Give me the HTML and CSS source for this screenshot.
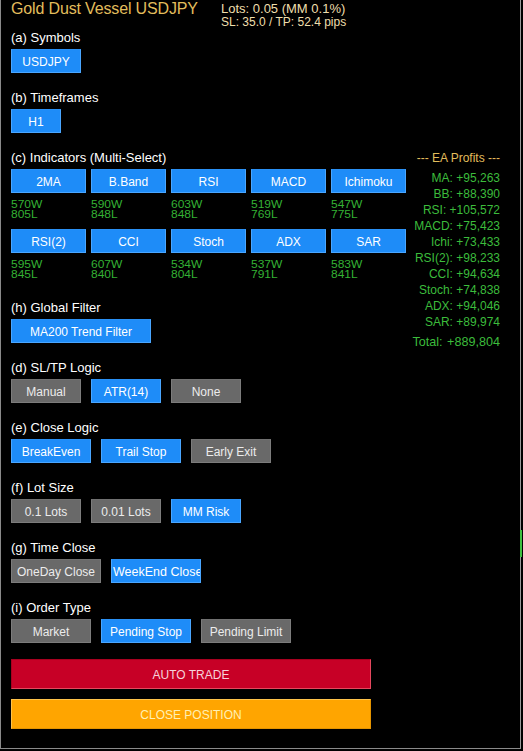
FILE: index.html
```html
<!DOCTYPE html>
<html>
<head>
<meta charset="utf-8">
<link rel="stylesheet" href="styles.css">
</head>
<body>
<div class="panel">
  <header class="head">
    <div class="title">Gold Dust Vessel USDJPY</div>
    <div class="info">
      <div class="lots">Lots: 0.05 (MM 0.1%)</div>
      <div class="sltp">SL: 35.0 / TP: 52.4 pips</div>
    </div>
  </header>

  <section class="sec">
    <div class="label">(a) Symbols</div>
    <div class="row"><div class="btn on w70">USDJPY</div></div>
  </section>

  <section class="sec">
    <div class="label">(b) Timeframes</div>
    <div class="row"><div class="btn on w50">H1</div></div>
  </section>

  <div class="mid">
    <div class="midleft">
      <section class="sec ind">
        <div class="label">(c) Indicators (Multi-Select)</div>
        <div class="grid">
          <div class="cell"><div class="btn on">2MA</div><div class="stats">570W<br>805L</div></div>
          <div class="cell"><div class="btn on">B.Band</div><div class="stats">590W<br>848L</div></div>
          <div class="cell"><div class="btn on">RSI</div><div class="stats">603W<br>848L</div></div>
          <div class="cell"><div class="btn on">MACD</div><div class="stats">519W<br>769L</div></div>
          <div class="cell"><div class="btn on">Ichimoku</div><div class="stats">547W<br>775L</div></div>
          <div class="cell"><div class="btn on">RSI(2)</div><div class="stats">595W<br>845L</div></div>
          <div class="cell"><div class="btn on">CCI</div><div class="stats">607W<br>840L</div></div>
          <div class="cell"><div class="btn on">Stoch</div><div class="stats">534W<br>804L</div></div>
          <div class="cell"><div class="btn on">ADX</div><div class="stats">537W<br>791L</div></div>
          <div class="cell"><div class="btn on">SAR</div><div class="stats">583W<br>841L</div></div>
        </div>
      </section>
      <section class="sec">
        <div class="label">(h) Global Filter</div>
        <div class="row"><div class="btn on w140">MA200 Trend Filter</div></div>
      </section>
    </div>
    <div class="profits">
      <div class="ph">--- EA Profits ---</div>
      <div class="pl">MA: +95,263</div>
      <div class="pl">BB: +88,390</div>
      <div class="pl">RSI: +105,572</div>
      <div class="pl">MACD: +75,423</div>
      <div class="pl">Ichi: +73,433</div>
      <div class="pl">RSI(2): +98,233</div>
      <div class="pl">CCI: +94,634</div>
      <div class="pl">Stoch: +74,838</div>
      <div class="pl">ADX: +94,046</div>
      <div class="pl">SAR: +89,974</div>
      <div class="pt">Total: +889,804</div>
    </div>
  </div>

  <section class="sec">
    <div class="label">(d) SL/TP Logic</div>
    <div class="row">
      <div class="btn off w70">Manual</div>
      <div class="btn on w70">ATR(14)</div>
      <div class="btn off w70">None</div>
    </div>
  </section>

  <section class="sec">
    <div class="label">(e) Close Logic</div>
    <div class="row">
      <div class="btn on w80">BreakEven</div>
      <div class="btn on w80">Trail Stop</div>
      <div class="btn off w80">Early Exit</div>
    </div>
  </section>

  <section class="sec">
    <div class="label">(f) Lot Size</div>
    <div class="row">
      <div class="btn off w70">0.1 Lots</div>
      <div class="btn off w70">0.01 Lots</div>
      <div class="btn on w70">MM Risk</div>
    </div>
  </section>

  <section class="sec">
    <div class="label">(g) Time Close</div>
    <div class="row">
      <div class="btn off w90">OneDay Close</div>
      <div class="btn on w90 tight">WeekEnd Close</div>
    </div>
  </section>

  <section class="sec last">
    <div class="label">(i) Order Type</div>
    <div class="row">
      <div class="btn off w80">Market</div>
      <div class="btn on w90">Pending Stop</div>
      <div class="btn off w90">Pending Limit</div>
    </div>
  </section>

  <div class="actions">
    <div class="big auto">AUTO TRADE</div>
    <div class="big close">CLOSE POSITION</div>
  </div>

  <div class="candle"></div>
</div>
</body>
</html>
```

FILE: styles.css
```css
html, body {
  margin: 0;
  padding: 0;
  background: #000;
}

body {
  font-family: "Liberation Sans", Arial, sans-serif;
  color: #fff;
}

.panel {
  position: relative;
  width: 489px;
  height: 748px;
  padding: 0 20px 0 10px;
  border-left: 1px solid #8a8a8a;
  border-right: 1px solid #9a9a9a;
  border-bottom: 1px solid #8a8a8a;
  display: flex;
  flex-direction: column;
}

.head {
  display: flex;
  height: 30px;
}

.title {
  width: 210px;
  font-size: 16px;
  line-height: 18px;
  color: #e2bd5c;
  letter-spacing: -0.15px;
}

.info {
  padding-top: 1px;
  color: #efdfac;
}

.lots {
  font-size: 13px;
  line-height: 15px;
  height: 15px;
}

.sltp {
  font-size: 12px;
  line-height: 12px;
}

.sec {
  margin-bottom: 17px;
}

.sec.ind {
  margin-bottom: 20px;
}

.sec.last {
  margin-bottom: 16px;
}

.label {
  font-size: 13px;
  line-height: 15px;
  height: 15px;
  margin-bottom: 4px;
  color: #fff;
}

.row {
  display: flex;
  gap: 10px;
}

.btn {
  box-sizing: border-box;
  height: 24px;
  font-size: 12px;
  line-height: 20px;
  padding-top: 2px;
  text-align: center;
  white-space: nowrap;
  overflow: hidden;
}

.btn.on {
  background: #1e8cf8;
  color: #fff;
  border: 1px solid #4aa6ff;
  border-top-color: #2a90f4;
}

.btn.off {
  background: #696969;
  color: #ececec;
  border: 1px solid #7c7c7c;
  border-top-color: #707070;
}

.btn.tight {
  padding-left: 0;
  padding-right: 0;
  font-size: 12.5px;
  text-align: left;
  text-indent: 1px;
}

.w50 { width: 50px; }
.w70 { width: 70px; }
.w80 { width: 80px; }
.w90 { width: 90px; }
.w140 { width: 140px; }

.mid {
  display: flex;
  justify-content: space-between;
}

.midleft {
  width: 400px;
}

.grid {
  display: grid;
  grid-template-columns: repeat(5, 75px);
  column-gap: 5px;
  row-gap: 9px;
}

.cell .btn {
  width: 75px;
}

.stats {
  margin-top: 7px;
  height: 20px;
  font-size: 10px;
  line-height: 10px;
  color: #34b234;
  transform: scaleX(1.2);
  transform-origin: left top;
}

.profits {
  text-align: right;
  color: #3cbc3c;
  font-size: 12px;
  line-height: 16px;
}

.ph {
  color: #e2bd5c;
  margin-bottom: 4px;
}

.pt {
  margin-top: 4px;
  font-size: 12.6px;
  word-spacing: 1px;
}

.actions {
  display: flex;
  flex-direction: column;
  gap: 10px;
}

.big {
  box-sizing: border-box;
  width: 360px;
  height: 30px;
  font-size: 12px;
  line-height: 28px;
  padding-top: 1px;
  text-align: center;
}

.big.auto {
  background: #c70026;
  color: #f6d2da;
  border: 1px solid #a8001f;
  border-right-color: #e4485e;
  border-bottom-color: #e4485e;
}

.big.close {
  background: #ffa500;
  color: #fff0b4;
  border: 1px solid #ffc24a;
  border-bottom-color: #e59400;
  border-right-color: #e59400;
}

.candle {
  position: absolute;
  left: 519px;
  top: 530px;
  width: 2px;
  height: 27px;
  background: #3fbf3f;
}
```
